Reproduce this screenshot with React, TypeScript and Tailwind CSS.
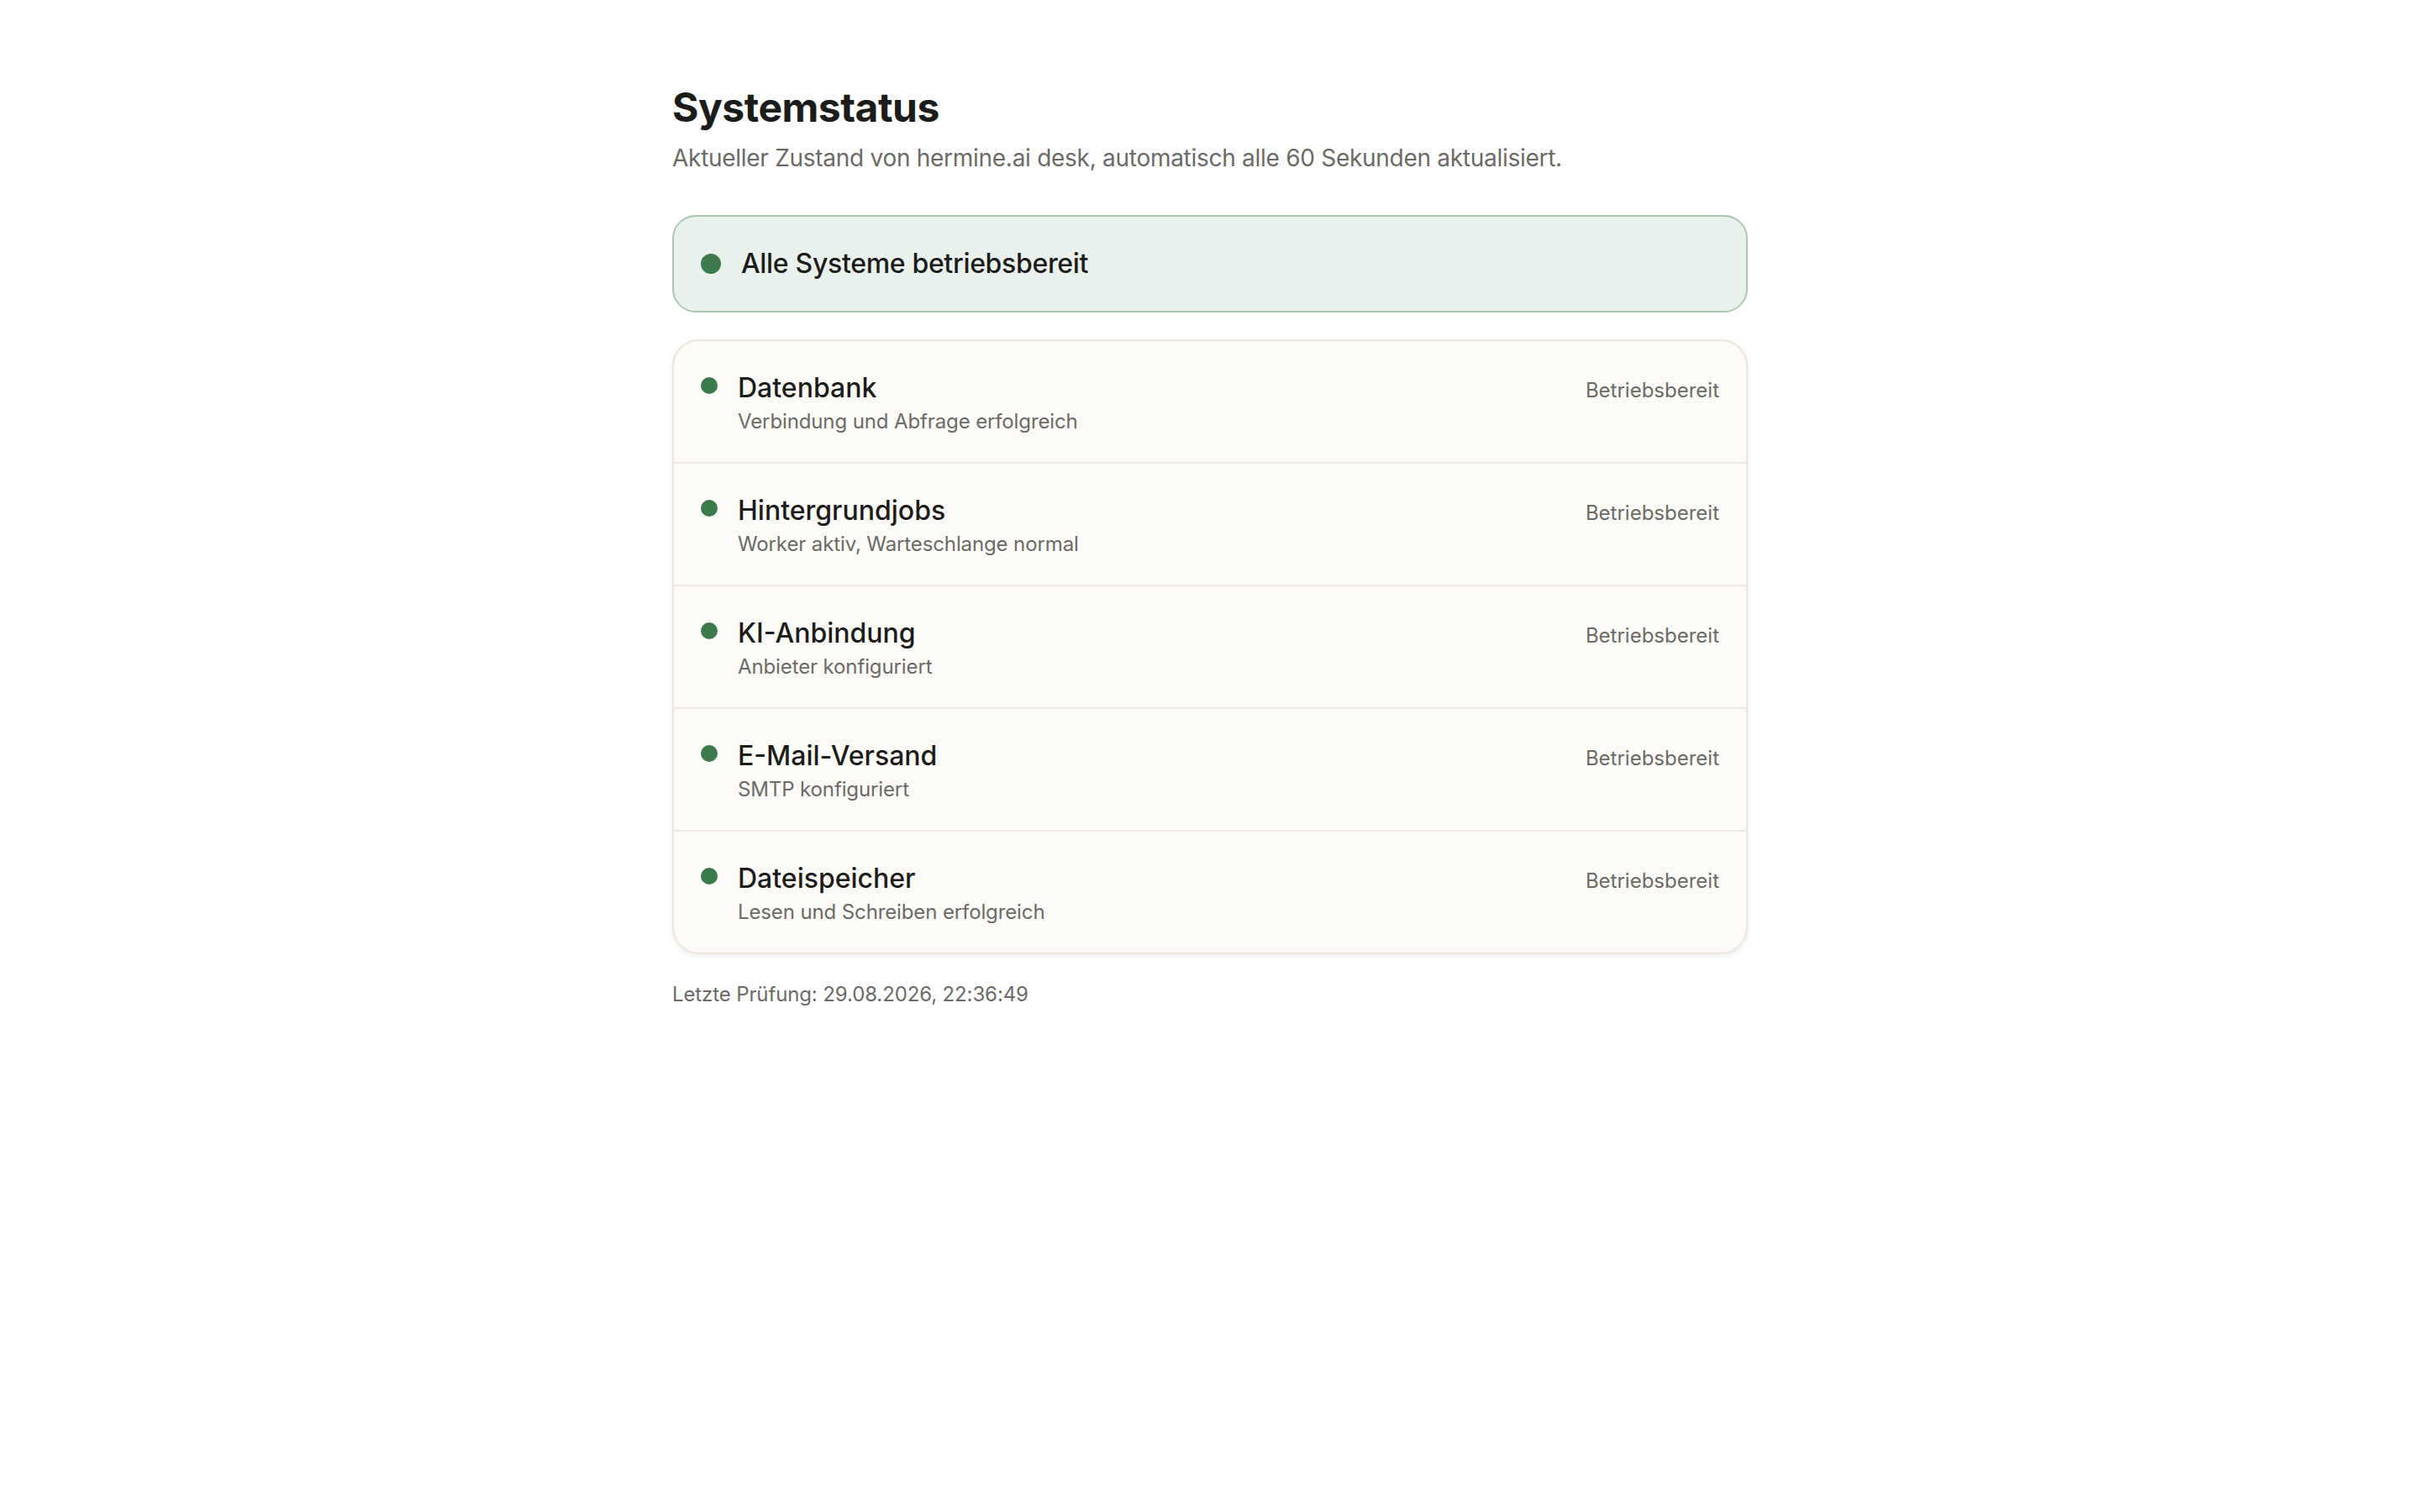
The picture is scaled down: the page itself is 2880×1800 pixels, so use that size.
const services = [
  { name: 'Datenbank', detail: 'Verbindung und Abfrage erfolgreich' },
  { name: 'Hintergrundjobs', detail: 'Worker aktiv, Warteschlange normal' },
  { name: 'KI-Anbindung', detail: 'Anbieter konfiguriert' },
  { name: 'E-Mail-Versand', detail: 'SMTP konfiguriert' },
  { name: 'Dateispeicher', detail: 'Lesen und Schreiben erfolgreich' },
]

export default function App() {
  return (
    <div className="min-h-screen bg-white font-['Inter',sans-serif] antialiased">
      <div className="mx-auto max-w-[1280px] pt-24">
        <h1 className="text-[48px] leading-[64px] font-bold tracking-[-0.01em] text-[#1c1c1a]">Systemstatus</h1>
        <p className="mt-2 text-[28px] leading-[40px] tracking-[-0.01em] text-[#6b6a65]">
          Aktueller Zustand von hermine.ai desk, automatisch alle 60 Sekunden aktualisiert.
        </p>

        <div className="mt-12 flex items-center gap-6 rounded-[28px] border-2 border-[#a9c7b1] bg-[#e9f1ec] p-8">
          <span className="size-6 shrink-0 rounded-full bg-[#3c7a4b]" />
          <span className="text-[32px] leading-[48px] font-medium tracking-[-0.01em] text-[#1c1c1a]">
            Alle Systeme betriebsbereit
          </span>
        </div>

        <div className="mt-8 divide-y-2 divide-[#eee8e0] overflow-hidden rounded-[32px] border-2 border-[#ece6dd] bg-[#fcfbf8] shadow-[0_2px_6px_rgba(0,0,0,0.08)]">
          {services.map((s) => (
            <div key={s.name} className="flex items-start gap-6 px-8 pt-[34px] pb-[30px]">
              <span className="mt-[9px] size-5 shrink-0 rounded-full bg-[#3c7a4b]" />
              <div className="flex-1">
                <div className="text-[32px] leading-[44px] font-medium text-[#1c1c1a]">{s.name}</div>
                <div className="text-[24px] leading-[36px] tracking-[-0.005em] text-[#6b6a65]">{s.detail}</div>
              </div>
              <span className="mt-[3px] text-[24px] leading-[44px] text-[#6b6a65]">Betriebsbereit</span>
            </div>
          ))}
        </div>

        <p className="mt-8 text-[24px] leading-[32px] tracking-[-0.005em] text-[#6b6a65]">
          Letzte Prüfung: 29.08.2026, 22:36:49
        </p>
      </div>
    </div>
  )
}
